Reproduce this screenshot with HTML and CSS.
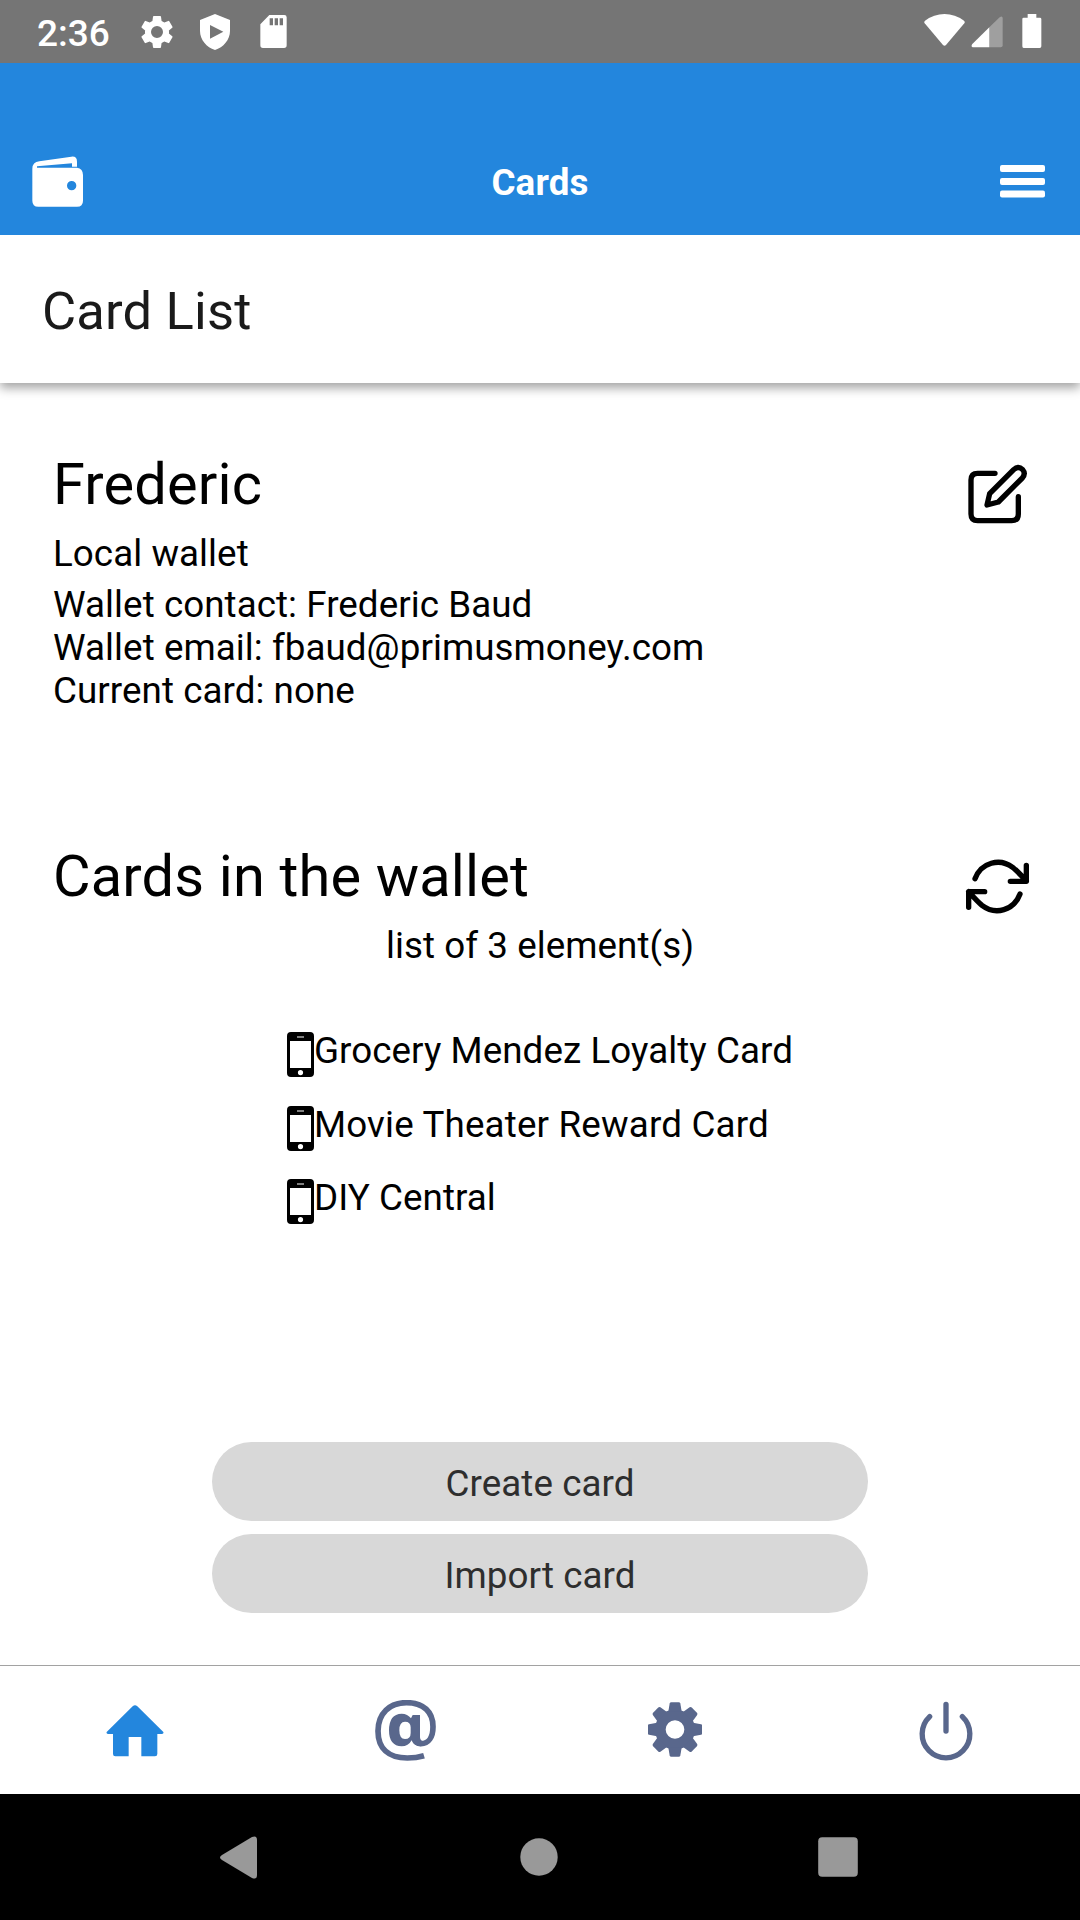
FILE: index.html
```html
<!DOCTYPE html>
<html lang="en">
<head>
<meta charset="utf-8">
<title>Cards</title>
<link rel="stylesheet" href="styles.css">
</head>
<body>
<div class="screen">
  <div class="status">
    <span class="clock">2:36</span>
    <svg class="st-gear" width="40" height="40" viewBox="0 0 24 24"><path fill="#fff" d="M19.14 12.94c.04-.3.06-.61.06-.94 0-.32-.02-.64-.07-.94l2.03-1.58a.49.49 0 0 0 .12-.61l-1.92-3.32a.49.49 0 0 0-.59-.22l-2.39.96c-.5-.38-1.03-.7-1.62-.94l-.36-2.54a.48.48 0 0 0-.48-.41h-3.84a.48.48 0 0 0-.47.41l-.36 2.54c-.59.24-1.13.57-1.62.94l-2.39-.96a.48.48 0 0 0-.59.22L2.74 8.87a.48.48 0 0 0 .12.61l2.03 1.58c-.05.3-.09.63-.09.94s.02.64.07.94l-2.03 1.58a.49.49 0 0 0-.12.61l1.92 3.32c.12.22.37.29.59.22l2.39-.96c.5.38 1.03.7 1.62.94l.36 2.54c.05.24.24.41.48.41h3.84c.24 0 .44-.17.47-.41l.36-2.54c.59-.24 1.13-.56 1.62-.94l2.39.96c.22.08.47 0 .59-.22l1.92-3.32a.48.48 0 0 0-.12-.61zM12 15.6A3.6 3.6 0 1 1 12 8.400a3.600 3.600 0 0 1 0 7.200z"/></svg>
    <svg class="st-shield" width="30" height="36" viewBox="0 0 90 108"><path fill="#fff" fill-rule="evenodd" d="M45 0 90 18V51C90 77 70 101 45 108 20 101 0 77 0 51V18zM30 33V74L70 53.500z"/></svg>
    <svg class="st-sd" width="27" height="33" viewBox="0 0 81 99"><path fill="#fff" fill-rule="evenodd" d="M28 0H73Q80 0 80 7V91Q80 99 72 99H9Q1 99 1 91V28zM29 10V31H39V10zM44 10V31H54V10zM59 10V31H69V10z"/></svg>
    <span class="spacer"></span>
    <svg class="st-wifi" width="41" height="33" viewBox="0 0 123 99"><path fill="#fff" d="M3 20Q30 0 61.500 0T120 20Q124 24 121 28L66 93Q61.500 98 57 93L2 28Q-1 24 3 20z"/></svg>
    <svg class="st-signal" width="32" height="32" viewBox="0 0 96 96"><path fill="#9f9f9f" d="M55 34 86 4Q94-2 95 6V88Q95 94 89 94H55z"/><path fill="#fff" d="M55 34V94H5Q-1 92 4 84z"/></svg>
    <svg class="st-battery" width="20" height="35" viewBox="0 0 60 105"><path fill="#fff" d="M17 0H43V11H54Q58 11 58 15V97Q58 102 53 102H5Q1 102 1 97V15Q1 11 5 11H17z"/></svg>
  </div>

  <header class="appbar">
    <svg width="52" height="51" viewBox="0 0 156 153"><path fill="#fff" fill-rule="evenodd" d="M22 16 118 2Q135 0 135 17V32H120V22L15 31V35H135Q153 38 153 57V134Q153 152 135 152H19Q1 152 1 134V38Q1 19 22 16zM119 75A14 14 0 1 0 119 103 14 14 0 0 0 119 75z"/></svg>
    <h1>Cards</h1>
    <svg width="45" height="33" viewBox="0 0 45 33"><g fill="#fff"><rect width="45" height="7" rx="2"/><rect y="13" width="45" height="7" rx="2"/><rect y="25.500" width="45" height="7" rx="2"/></g></svg>
  </header>

  <div class="subhead">Card List</div>

  <main>
    <section class="wallet">
      <div class="info">
        <h2>Frederic</h2>
        <p class="kind">Local wallet</p>
        <p>Wallet contact: Frederic Baud</p>
        <p>Wallet email: fbaud@primusmoney.com</p>
        <p>Current card: none</p>
      </div>
      <svg class="edit" width="61" height="61" viewBox="201 102 183 183" fill="none" stroke="#000" stroke-width="16" stroke-linecap="round" stroke-linejoin="round"><path d="M285 130H233Q213 130 213 150V252Q213 272 233 272H335Q355 272 355 252V200"/><path d="M261 225 269 191 341 119Q355 106 368 119 378 131 367 144L295 216z"/></svg>
    </section>

    <section class="cards">
      <div class="row">
        <h2>Cards in the wallet</h2>
        <svg class="sync" width="65" height="55" viewBox="195 87 195 165" fill="none" stroke="#000" stroke-width="16" stroke-linecap="round" stroke-linejoin="round"><path d="M225 146C244 97 299 83 338 112Q350 121 379 153M379 106V154H331M360 192C342 241 287 257 246 226Q235 217 206 185M206 232V185H254"/></svg>
      </div>
      <p class="count">list of 3 element(s)</p>
      <ul>
        <li><svg width="27" height="45" viewBox="0 0 27 45"><path fill-rule="evenodd" d="M4 0H23Q27 0 27 4V41Q27 45 23 45H4Q0 45 0 41V4Q0 0 4 0zM3 9V36H24V9zM10 4.500V5.500H17V4.500zM13.500 38A2.600 2.600 0 1 0 13.500 43.200 2.600 2.600 0 0 0 13.500 38z"/></svg><span>Grocery Mendez Loyalty Card</span></li>
        <li><svg width="27" height="45" viewBox="0 0 27 45"><path fill-rule="evenodd" d="M4 0H23Q27 0 27 4V41Q27 45 23 45H4Q0 45 0 41V4Q0 0 4 0zM3 9V36H24V9zM10 4.500V5.500H17V4.500zM13.500 38A2.600 2.600 0 1 0 13.500 43.200 2.600 2.600 0 0 0 13.500 38z"/></svg><span class="wide">Movie Theater Reward Card</span></li>
        <li><svg width="27" height="45" viewBox="0 0 27 45"><path fill-rule="evenodd" d="M4 0H23Q27 0 27 4V41Q27 45 23 45H4Q0 45 0 41V4Q0 0 4 0zM3 9V36H24V9zM10 4.500V5.500H17V4.500zM13.500 38A2.600 2.600 0 1 0 13.500 43.200 2.600 2.600 0 0 0 13.500 38z"/></svg><span>DIY Central</span></li>
      </ul>
    </section>

    <div class="actions">
      <button>Create card</button>
      <button>Import card</button>
    </div>
  </main>

  <nav class="tabs">
    <div><svg class="home" width="58" height="52" viewBox="0 0 174 156"><path fill="#2386dd" d="M80 4Q87-3 94 4L172 81Q174 86 168 87H154V147Q154 154 147 154H106V96H68V154H28Q21 154 21 147V87H6Q0 86 2 81z"/></svg></div>
    <div><svg class="at" width="61" height="61" viewBox="0 0 183 183"><path fill="none" stroke="#59678c" stroke-width="17" d="M147 167Q124 174 97 174C40 174 9 145 9 93 9 40 44 8 94 8 146 8 174 36 174 80 174 112 160 131 138 131Q124 131 119 118"/><path fill="#59678c" fill-rule="evenodd" d="M80 41Q98 41 108 55L113 45H135V112Q136 123 145 124L138 139Q116 139 110 121 100 139 80 139 42 138 42 91 42 42 80 41zM90 65Q73 65 73 91T90 117 107 99V82Q107 65 90 65z"/></svg></div>
    <div><svg class="gear" width="54" height="55" viewBox="-81 -82 162 164"><g fill="#59678c"><path fill-rule="evenodd" d="M0-60A60 60 0 1 1 0 60 60 60 0 0 1 0-60zM0-28A28 28 0 1 0 0 28 28 28 0 0 0 0-28z"/><path id="t" d="M-20-54-16-78Q-15-82-11-82H11Q15-82 16-78L20-54z"/><use href="#t" transform="rotate(45)"/><use href="#t" transform="rotate(90)"/><use href="#t" transform="rotate(135)"/><use href="#t" transform="rotate(180)"/><use href="#t" transform="rotate(225)"/><use href="#t" transform="rotate(270)"/><use href="#t" transform="rotate(315)"/></g></svg></div>
    <div><svg class="power" width="54" height="60" viewBox="0 0 162 180" fill="none" stroke="#59678c" stroke-width="16" stroke-linecap="round"><path d="M81 10V90M32 47A71.500 71.500 0 1 0 130 47"/></svg></div>
  </nav>

  <div class="sysnav">
    <svg width="37" height="43" viewBox="0 0 37 43"><path fill="#999" d="M2 19 32 1Q37-1 37 4V39Q37 44 32 42L2 24Q-2 21.500 2 19z"/></svg>
    <svg class="circle" width="38" height="38" viewBox="0 0 38 38"><circle cx="19" cy="19" r="18.700" fill="#999"/></svg>
    <svg width="40" height="40" viewBox="0 0 40 40"><rect x=".2" y=".2" width="39.600" height="39.600" rx="4" fill="#999"/></svg>
  </div>
</div>
</body>
</html>
```
FILE: styles.css
```css
* { box-sizing: border-box; }
body { margin: 0; background: #fff; }
svg { display: block; flex: none; }
h1, h2, p, ul { margin: 0; padding: 0; font-weight: 400; }

.screen {
  width: 1080px;
  height: 1920px;
  display: flex;
  flex-direction: column;
  font: 36.75px/43px Roboto, sans-serif;
  letter-spacing: .06px;
  color: #000;
  overflow: hidden;
}

.status {
  height: 63px;
  flex: none;
  display: flex;
  align-items: flex-start;
  background: #757575;
  color: #fff;
  padding: 0 38px 0 37px;
}
.clock { font-size: 37px; font-weight: 500; line-height: 44px; letter-spacing: 0; margin-top: 12px; width: 100px; }
.st-gear { margin-top: 12px; }
.st-shield { margin: 14px 0 0 23px; }
.st-sd { margin: 15px 0 0 30px; }
.spacer { flex: 1; }
.st-wifi { margin-top: 14px; }
.st-signal { margin: 16px 0 0 6px; }
.st-battery { margin: 14px 0 0 19px; }

.appbar {
  height: 172px;
  flex: none;
  display: grid;
  grid-template-columns: 1fr auto 1fr;
  align-items: center;
  padding: 65px 35px 1px;
  background: #2386dd;
  color: #fff;
}
.appbar h1 { font-size: 36.75px; font-weight: 700; letter-spacing: .15px; padding-top: 3px; }
.appbar svg:first-child { margin: 1px 0 0 -3px; }
.appbar svg:last-child { justify-self: end; }

.subhead {
  height: 148px;
  flex: none;
  padding: 45px 42px 0;
  font-size: 52.5px;
  line-height: 62px;
  letter-spacing: .18px;
  color: #1a1a1a;
  background: #fff;
  box-shadow: 0 5px 10px rgba(0, 0, 0, .36);
  clip-path: inset(0 0 -20px 0);
}

main {
  flex: 1;
  display: flex;
  flex-direction: column;
  padding: 67px 53px 52px;
}
.wallet { display: flex; justify-content: space-between; }
h2 { font-size: 57.75px; line-height: 68px; letter-spacing: .16px; }
.edit { margin: 14px -1px 0 0; }
.kind { margin: 14px 0 8px; }
.cards { margin-top: 130px; }
.row { display: flex; justify-content: space-between; }
.sync { margin: 17px -3px 0 0; }
.count { margin-top: 10px; text-align: center; }
ul { list-style: none; margin: 62px 0 0 234px; display: grid; gap: 28.5px; }
li { display: flex; height: 45px; align-items: flex-start; }
li svg { margin-top: 3px; }
.wide { letter-spacing: .17px; }

.actions { margin: auto 159px 0; display: grid; gap: 13px; }
button {
  height: 79px;
  border: 0;
  border-radius: 40px;
  padding: 3px 0 0;
  background: #d8d8d8;
  color: #2e2e2e;
  font: 36.75px/43px Roboto, sans-serif;
  letter-spacing: .07px;
}

.tabs {
  height: 129px;
  flex: none;
  display: grid;
  grid-template-columns: repeat(4, 270px);
  border-top: 1px solid #a2a2a2;
  background: #fff;
}
.tabs > div { display: flex; justify-content: center; align-items: flex-start; padding-left: 1px; }
.tabs > div:nth-child(odd) { padding-left: 0; }
.home { margin-top: 39px; }
.at { margin-top: 34px; }
.gear { margin-top: 36px; }
.power { margin-top: 35px; }

.sysnav {
  height: 126px;
  flex: none;
  display: flex;
  align-items: center;
  justify-content: space-between;
  padding: 0 222px 0 220px;
  background: #000;
}
.circle { margin-left: 3px; }
```
